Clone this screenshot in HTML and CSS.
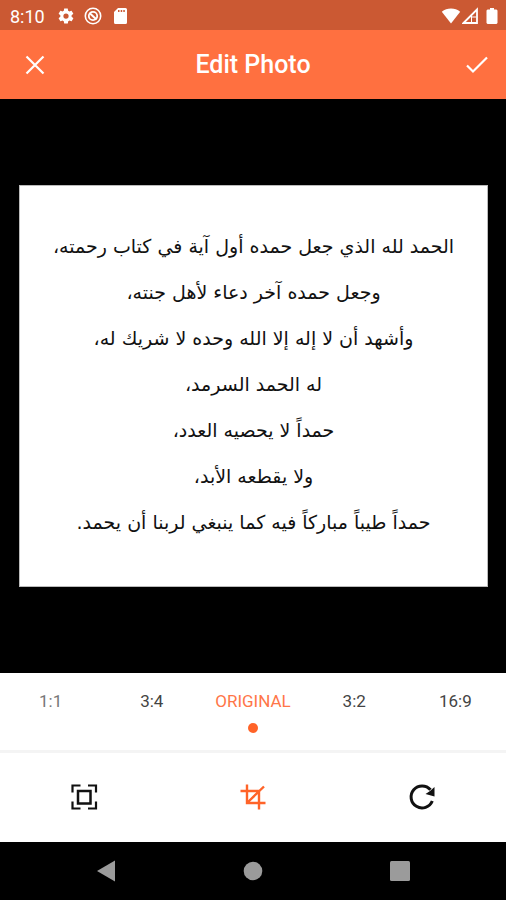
FILE: index.html
```html
<!DOCTYPE html>
<html lang="en">
<head>
<meta charset="utf-8">
<meta name="viewport" content="width=device-width, initial-scale=1">
<title>Edit Photo</title>
<link rel="stylesheet" href="styles.css">
</head>

<body>

<div class="statusbar">
	<span class="clock">8:10</span>
	<svg width="18" height="18" viewBox="0 0 24 24" fill="#fff"><path d="M19.4 13c.1-.3.1-.7.1-1s0-.7-.1-1l2.1-1.6c.2-.2.3-.4.1-.7l-2-3.4c-.1-.3-.4-.3-.6-.3l-2.5 1c-.5-.4-1.100-.7-1.700-1l-.4-2.600c0-.3-.2-.4-.4-.4h-4c-.2 0-.5.200-.5.400l-.4 2.600c-.6.300-1.200.600-1.700 1l-2.500-1c-.2-.1-.5 0-.6.300l-2 3.400c-.1.200-.1.500.1.700L4.500 11c0 .3-.1.700-.1 1s0 .7.1 1l-2.100 1.600c-.2.200-.3.400-.1.700l2 3.400c.1.300.4.300.6.300l2.500-1c.5.400 1.100.7 1.700 1l.4 2.600c0 .3.300.4.500.4h4c.2 0 .5-.2.500-.4l.4-2.600c.6-.3 1.200-.6 1.700-1l2.500 1c.2.100.5 0 .6-.3l2-3.400c.1-.2.100-.5-.1-.7L19.400 13zM12 15.500a3.500 3.500 0 1 1 0-7 3.500 3.500 0 0 1 0 7z"/></svg>
	<svg width="18" height="18" viewBox="0 0 18 18" fill="none" stroke="#fff"><circle cx="9" cy="9" r="7.700" stroke-width="1.600"/><circle cx="9" cy="9" r="4.200" stroke-width="1.800"/><path d="M5.500 6l7 6.500" stroke-width="2"/></svg>
	<svg width="18" height="18" viewBox="0 0 18 18" fill="#fff"><path fill-rule="evenodd" d="M7 1h7.500A1.500 1.500 0 0 1 16 2.500v13a1.500 1.500 0 0 1-1.500 1.500h-10A1.500 1.500 0 0 1 3 15.500V5zM7 3v2h1.500V3zm2.700 0v2h1.500V3zm2.600 0v2h1.500V3z"/></svg>
	<div class="signals">
		<svg width="20" height="18" viewBox="0 0 20 18" fill="#fff"><path d="M10 16.500L.8 4.800C3.500 2.500 6.500 1.500 10 1.500s6.500 1 9.200 3.300z"/></svg>
		<svg width="16" height="18" viewBox="0 0 16 18"><path d="M1.500 16L15 2.500V16z" fill="none" stroke="#fff" stroke-width="1.800"/><path d="M9.500 8v8M10 10h4" stroke="#fff" stroke-width="1"/></svg>
		<svg class="battery" width="12" height="18" viewBox="0 0 12 18" fill="#fff"><path d="M4 1h4v1.500h2.500l1 1V16l-1 1h-9l-1-1V3.500l1-1H4z"/></svg>
	</div>
</div>

<header class="titlebar">
	<button type="button" class="close" aria-label="Close"><svg width="20" height="20" viewBox="0 0 20 20" fill="none" stroke="#fff" stroke-width="2.200"><path d="M1.500 1.500l17 17M18.500 1.500l-17 17"/></svg></button>
	<h1>Edit Photo</h1>
	<button type="button" class="done" aria-label="Done"><svg width="22" height="20" viewBox="0 0 22 20" fill="none" stroke="#fff" stroke-width="2.200"><path d="M1 10.500l6 6L21 2.500"/></svg></button>
</header>

<main class="photo">
	<div class="paper" lang="ar" dir="rtl">
		<p>الحمد لله الذي جعل حمده أول آية في كتاب رحمته،</p>
		<p>وجعل حمده آخر دعاء لأهل جنته،</p>
		<p>وأشهد أن لا إله إلا الله وحده لا شريك له،</p>
		<p>له الحمد السرمد،</p>
		<p>حمداً لا يحصيه العدد،</p>
		<p>ولا يقطعه الأبد،</p>
		<p>حمداً طيباً مباركاً فيه كما ينبغي لربنا أن يحمد.</p>
	</div>
</main>

<div class="ratios">
	<button type="button" class="first">1:1</button>
	<button type="button">3:4</button>
	<button type="button" class="active">ORIGINAL</button>
	<button type="button">3:2</button>
	<button type="button">16:9</button>
</div>

<div class="tools">
	<button type="button" aria-label="Scale"><svg width="28" height="28" viewBox="0 0 28 28" fill="none" stroke="#111" stroke-width="2.200"><path d="M2.500 9.500V2.500h8M18 2.500h8v7M26 18.500v7h-8M10.500 25.500h-8v-7"/><rect x="8" y="8" width="12.500" height="12.500" stroke-width="2.500"/></svg></button>
	<button type="button" aria-label="Crop"><svg width="28" height="28" viewBox="0 0 28 28" fill="none" stroke="#ff6328" stroke-width="2.400"><path d="M1.500 8H20v18.500M8 1.500V20h18.500M8.500 19.500L25 3.500"/></svg></button>
	<button type="button" aria-label="Rotate"><svg width="28" height="28" viewBox="0 0 28 28"><path d="M22.500 6.800A11 11 0 1 0 24.300 18" fill="none" stroke="#111" stroke-width="3"/><path d="M26.500 4v9.500L17.500 11l4.500-3z" fill="#111"/></svg></button>
</div>

<nav class="navbar">
	<button type="button" aria-label="Back"><svg width="20" height="22" viewBox="0 0 20 22" fill="#9b9b9b"><path d="M19 .5v21L1 11z"/></svg></button>
	<button type="button" aria-label="Home"><svg width="20" height="20" viewBox="0 0 20 20" fill="#9b9b9b"><circle cx="10" cy="10" r="9.300"/></svg></button>
	<button type="button" aria-label="Recent apps"><svg width="20" height="20" viewBox="0 0 20 20" fill="#9b9b9b"><rect width="20" height="20" rx="1.500"/></svg></button>
</nav>

</body>
</html>
```

FILE: styles.css
```css
* {box-sizing: border-box;}
body {margin: 0; min-height: 100vh; display: flex; flex-direction: column; background: #000; font-family: Roboto, Arial, sans-serif;}
button {border: 0; padding: 0; background: none; font: inherit; color: inherit; cursor: pointer;}
svg {display: block;}

.statusbar {display: flex; align-items: center; gap: 9px; height: 30px; padding: 2px 8px 0 10px; background: #cb5933; color: #fff;}
.clock {font-size: 18px; margin-right: 3px;}
.signals {display: flex; align-items: center; gap: 1px; margin-left: auto;}
.battery {margin-left: 7px;}

.titlebar {display: flex; align-items: center; justify-content: space-between; height: 69px; background: #ff7040; color: #fff;}
.titlebar h1 {margin: 0; font-size: 25px; font-weight: 500;}
.titlebar button {display: flex; align-items: center; justify-content: center; width: 62px; height: 54px;}
.titlebar .close {padding-left: 8px;}
.titlebar .done {padding-left: 4px;}

.photo {flex: 1; display: flex; align-items: center; padding: 24px 18px 24px 19px;}
.paper {flex: 1; padding: 37px 8px 41px; border: 1px solid #bbb; background: #fff; color: #111; text-align: center; font-family: "DejaVu Sans", sans-serif; font-size: 19px;}
.paper p {margin: 0; line-height: 46px;}

.ratios {display: flex; height: 80px; background: #fff; border-bottom: 3px solid #f4f4f4; font-size: 17px; color: #444;}
.ratios button {flex: 1 1 0; display: flex; flex-direction: column; align-items: center; padding-top: 18px; line-height: 20px;}
.ratios .first {color: #777;}
.ratios .active {color: #ff7648;}
.ratios .active::after {content: ""; width: 10px; height: 10px; margin-top: 12px; border-radius: 50%; background: #ff6328;}

.tools {display: flex; height: 89px; padding-bottom: 2px; background: #fff;}
.tools button, .navbar button {flex: 1 1 0; display: flex; align-items: center; justify-content: center;}

.navbar {display: flex; height: 58px; padding: 0 32px; background: #000;}
```
